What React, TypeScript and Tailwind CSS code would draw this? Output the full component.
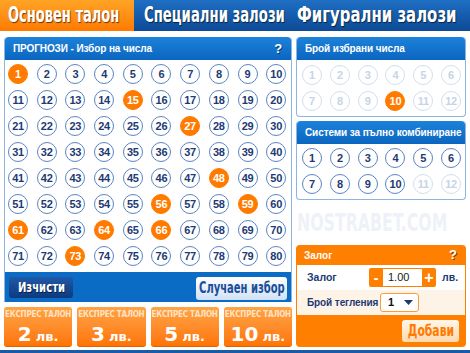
import React from "react";

type BallState = "normal" | "picked" | "off";

const Ball: React.FC<{ n: number; state: BallState }> = ({ n, state }) => {
  const look =
    state === "picked"
      ? "bg-[#ff7b00] border-[#ff7b00] text-white"
      : state === "off"
      ? "bg-white border-[#d3deec] text-[#c6d4e8]"
      : "bg-white border-[#5b85c2] text-[#1d3a73]";
  return (
    <div
      className={`w-[20px] h-[20px] rounded-full border-[1.5px] flex items-center justify-center text-[11px] font-bold tracking-[-0.3px] ${look}`}
    >
      {n}
    </div>
  );
};

const mainPicked = [1, 15, 27, 48, 56, 59, 61, 64, 66, 73];

const condensed = { fontFamily: '"DejaVu Sans Condensed", "DejaVu Sans", sans-serif' };

const PanelHead: React.FC<{ title: string; help?: boolean }> = ({ title, help }) => (
  <div className="h-[23px] rounded-t-[4px] bg-linear-to-b from-[#1c82da] to-[#0b66c0] flex items-center justify-between pl-[8px] pr-[9px] text-white text-[10px] font-bold whitespace-nowrap tracking-[-0.1px]">
    <span>{title}</span>
    {help && <span className="text-[13px] [text-shadow:1px_1px_0_rgba(0,0,0,0.5)]">?</span>}
  </div>
);

const Express: React.FC<{ amount: number }> = ({ amount }) => (
  <div className="h-[40px] rounded-[3px] bg-linear-to-b from-[#ffa443] to-[#ff7400] border-b border-[#e06000] flex flex-col items-center pt-[4px] text-white overflow-hidden">
    <div className="text-[8px] font-bold leading-none text-[#ffe3c6] whitespace-nowrap tracking-[-0.2px]" style={condensed}>
      ЕКСПРЕС ТАЛОН
    </div>
    <div className="leading-none mt-[5px] font-bold whitespace-nowrap" style={{ fontFamily: '"DejaVu Sans", sans-serif' }}>
      <span className="text-[20px]">{amount}</span>
      <span className="text-[13px] ml-[4px]">лв.</span>
    </div>
  </div>
);

export default function App() {
  const nums = Array.from({ length: 80 }, (_, i) => i + 1);
  const twelve = Array.from({ length: 12 }, (_, i) => i + 1);

  return (
    <div
      className="w-[470px] h-[353px] bg-white overflow-hidden flex flex-col"
      style={{ fontFamily: '"Liberation Sans", Arial, sans-serif' }}
    >
      {/* Tabs */}
      <div className="h-[31px] shrink-0 flex bg-linear-to-b from-[#1f6fc4] to-[#0d4a96] text-white font-bold text-[21px] [text-shadow:1px_1px_1px_rgba(0,0,0,0.6)]" style={condensed}>
        <div className="w-[134px] bg-linear-to-b from-[#ffa424] to-[#ff7a00] flex items-center pl-[8px]">
          <span className="inline-block origin-left scale-x-[0.69] whitespace-nowrap">Основен талон</span>
        </div>
        <div className="w-[153px] flex items-center pl-[10px]">
          <span className="inline-block origin-left scale-x-[0.7] whitespace-nowrap">Специални залози</span>
        </div>
        <div className="flex-1 flex items-center pl-[10px]">
          <span className="inline-block origin-left scale-x-[0.79] whitespace-nowrap">Фигурални залози</span>
        </div>
      </div>

      {/* Body */}
      <div className="flex gap-[4px] px-[4px] pt-[6px]">
        {/* Left column */}
        <div className="w-[290px] flex flex-col">
          <div className="rounded-t-[4px] border-x border-[#8cb5e2] bg-white">
            <PanelHead title="ПРОГНОЗИ - Избор на числа" help />
            <div className="grid grid-cols-[repeat(10,20px)] gap-x-[8.7px] gap-y-[6px] pl-[3px] pt-[4px] pb-[6px]">
              {nums.map((n) => (
                <Ball key={n} n={n} state={mainPicked.includes(n) ? "picked" : "normal"} />
              ))}
            </div>
            <div className="h-[30px] bg-[#0b6cc6] flex items-center justify-between pl-[4px] pr-[4px]">
              <button
                className="h-[21px] w-[64px] rounded-[3px] bg-linear-to-b from-[#2159a8] to-[#0c3a80] text-white text-[14px] font-bold [text-shadow:1px_1px_0_rgba(0,0,0,0.6)] flex items-center justify-center whitespace-nowrap"
                style={condensed}
              >
                <span className="inline-block scale-x-[0.8]">Изчисти</span>
              </button>
              <button
                className="h-[23px] w-[91px] mt-[2px] rounded-[3px] bg-linear-to-b from-[#ffffff] to-[#cfe2f6] text-[#1b4e9b] text-[15px] font-bold flex items-center justify-center whitespace-nowrap"
                style={condensed}
              >
                <span className="inline-block scale-x-[0.74] shrink-0">Случаен избор</span>
              </button>
            </div>
          </div>
          <div className="grid grid-cols-4 gap-[5px] mt-[5px]">
            <Express amount={2} />
            <Express amount={3} />
            <Express amount={5} />
            <Express amount={10} />
          </div>
        </div>

        {/* Right column */}
        <div className="w-[170px] flex flex-col">
          <div className="rounded-[4px] border border-[#8cb5e2] border-t-0">
            <PanelHead title="Брой избрани числа" />
            <div className="grid grid-cols-[repeat(6,20px)] gap-x-[7.8px] gap-y-[6px] pl-[5px] pt-[5px] pb-[5px]">
              {twelve.map((n) => (
                <Ball key={n} n={n} state={n === 10 ? "picked" : "off"} />
              ))}
            </div>
          </div>
          <div className="rounded-[4px] border border-[#8cb5e2] border-t-0 mt-[4px]">
            <PanelHead title="Системи за пълно комбиниране" />
            <div className="grid grid-cols-[repeat(6,20px)] gap-x-[7.8px] gap-y-[6px] pl-[5px] pt-[4px] pb-[5px]">
              {twelve.map((n) => (
                <Ball key={n} n={n} state={n > 10 ? "off" : "normal"} />
              ))}
            </div>
          </div>
          <div className="h-[45px] flex items-center pl-[1px]">
            <span
              className="inline-block origin-left scale-x-[0.7] text-[25px] font-bold text-[#eef2f8] whitespace-nowrap"
              style={condensed}
            >
              NOSTRABET.COM
            </span>
          </div>
          <div className="h-[102px] rounded-[4px] bg-[#ff8000] flex flex-col px-[1px]">
            <div className="h-[20px] flex items-center justify-between pl-[7px] pr-[8px] text-white text-[10px] font-bold">
              <span>Залог</span>
              <span className="text-[13px] [text-shadow:1px_1px_0_rgba(0,0,0,0.5)]">?</span>
            </div>
            <div className="h-[25px] bg-white flex items-center pl-[10px] text-[10.5px] font-bold text-[#1d3a73] whitespace-nowrap">
              <span className="w-[62px]">Залог</span>
              <div className="flex h-[19px]">
                <div className="w-[14px] bg-[#ff8000] rounded-l-[2px] text-white text-[14px] font-bold flex items-center justify-center leading-none">-</div>
                <div className="w-[39px] border-y border-[#ff8000] bg-white flex items-center pl-[5px] font-normal text-[11px] text-[#222]">1.00</div>
                <div className="w-[14px] bg-[#ff8000] rounded-r-[2px] text-white text-[16px] font-bold flex items-center justify-center leading-none">+</div>
              </div>
              <span className="ml-[6px]">лв.</span>
            </div>
            <div className="h-[25px] bg-[#fdf3e6] flex items-center pl-[10px] text-[10px] font-bold text-[#1d3a73] whitespace-nowrap">
              <span className="w-[73px] tracking-[-0.1px]">Брой тегления</span>
              <div className="w-[39px] h-[19px] bg-white border border-[#ff9a3a] rounded-[3px] flex items-center justify-between pl-[7px] pr-[5px] text-[11px] text-[#111]">
                <span>1</span>
                <svg width="9" height="5" viewBox="0 0 9 5">
                  <path d="M0 0 L9 0 L4.5 5 Z" fill="#1d3a73" />
                </svg>
              </div>
            </div>
            <div className="flex-1 flex items-center justify-end pr-[6px]">
              <button
                className="w-[57px] h-[22px] rounded-[3px] bg-linear-to-b from-[#fff6ea] to-[#ffd9ad] text-[#ff7a00] text-[15px] font-bold flex items-center justify-center whitespace-nowrap"
                style={condensed}
              >
                <span className="inline-block scale-x-[0.8]">Добави</span>
              </button>
            </div>
          </div>
        </div>
      </div>
      <div className="mt-auto h-[3px] shrink-0 bg-[#1a5ba8]" />
    </div>
  );
}
